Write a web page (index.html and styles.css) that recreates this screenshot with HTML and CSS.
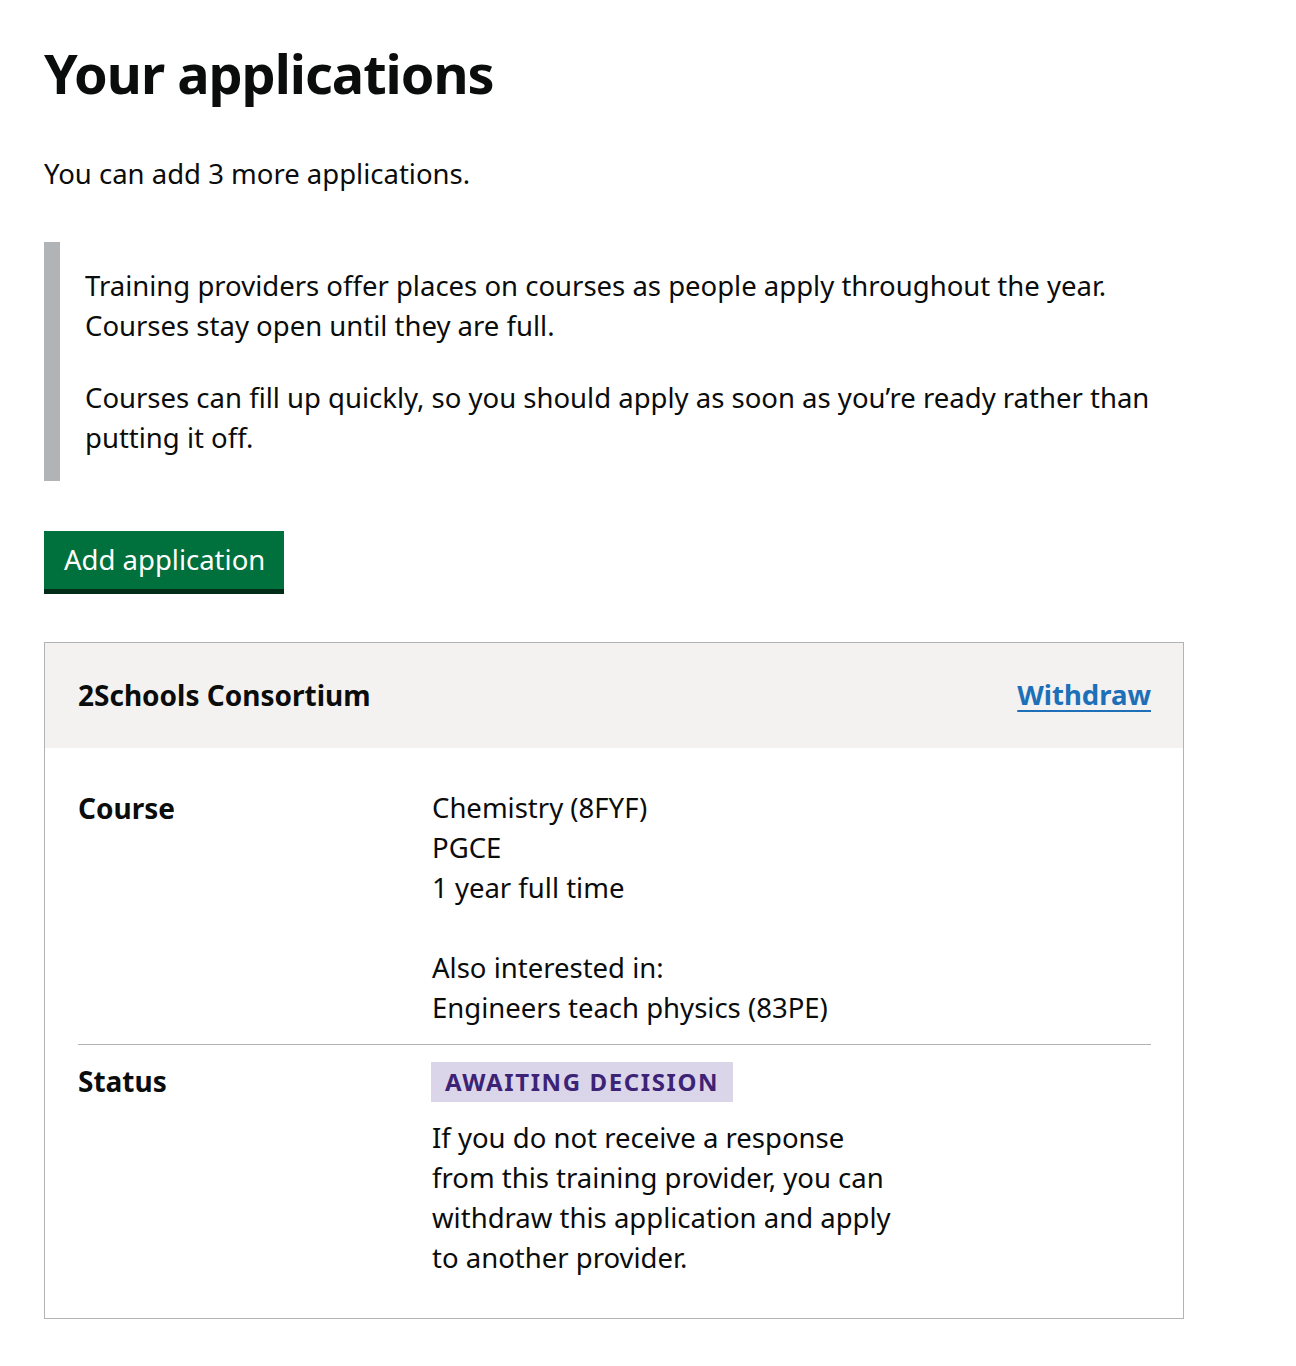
FILE: index.html
```html
<!DOCTYPE html>
<html lang="en">
<head>
<meta charset="utf-8">
<title>Your applications</title>
<link rel="stylesheet" href="styles.css">
</head>
<body>
<main class="page">
  <h1 class="heading">Your applications</h1>
  <p class="body lead">You can add 3 more applications.</p>
  <div class="inset">
    <p class="body">Training providers offer places on courses as people apply throughout the year. Courses stay open until they are full.</p>
    <p class="body">Courses can fill up quickly, so you should apply as soon as you’re ready rather than putting it off.</p>
  </div>
  <a class="button" href="#">Add application</a>
  <section class="card">
    <div class="card-header">
      <h2 class="card-title">2Schools Consortium</h2>
      <a class="card-link" href="#">Withdraw</a>
    </div>
    <dl class="summary">
      <div class="row row-course">
        <dt class="key">Course</dt>
        <dd class="value">
          <p class="body">Chemistry (8FYF)<br>PGCE<br>1 year full time</p>
          <p class="body">Also interested in:<br>Engineers teach physics (83PE)</p>
        </dd>
      </div>
      <div class="row row-status">
        <dt class="key">Status</dt>
        <dd class="value">
          <strong class="tag">Awaiting decision</strong>
          <p class="body narrow">If you do not receive a response from this training provider, you can withdraw this application and apply to another provider.</p>
        </dd>
      </div>
    </dl>
  </section>
</main>
</body>
</html>
```

FILE: styles.css
```css
* { box-sizing: border-box; }
html, body { margin: 0; padding: 0; background: #fff; }
body {
  font-family: "Noto Sans", "Liberation Sans", sans-serif;
  color: #0b0c0c;
}
.page {
  padding: 37px 44px 40px 44px;
  width: 1184px;
}
.heading {
  margin: 0;
  font-size: 54px;
  line-height: 72px;
  font-weight: 700;
  letter-spacing: -1px;
}
.body {
  margin: 0;
  font-size: 27.5px;
  line-height: 40px;
}
.lead {
  margin-top: 45px;
}
.inset {
  margin-top: 48px;
  border-left: 16px solid #b1b4b6;
  padding: 24px 0 23px 25px;
  display: flex;
  flex-direction: column;
  gap: 32px;
  width: 1140px;
}
.button {
  display: inline-block;
  margin-top: 50px;
  background: #00703c;
  color: #fff;
  text-decoration: none;
  font-size: 27.5px;
  line-height: 40px;
  padding: 9px 19px 9px 20px;
  box-shadow: 0 5px 0 #002d18;
}
.card {
  margin-top: 53px;
  width: 1140px;
  border: 1px solid #b1b4b6;
}
.card-header {
  background: #f3f2f1;
  display: flex;
  justify-content: space-between;
  align-items: center;
  padding: 32px 32px 33px 33px;
}
.card-title {
  margin: 0;
  font-size: 28px;
  line-height: 40px;
  font-weight: 700;
}
.card-link {
  font-size: 27.5px;
  line-height: 40px;
  font-weight: 700;
  color: #1d70b8;
  text-decoration: underline;
  text-decoration-thickness: 2px;
  text-underline-offset: 5px;
}
.summary {
  margin: 0;
  padding: 40px 32px 40px 33px;
}
.row {
  display: flex;
}
.row-course {
  padding-bottom: 16px;
  border-bottom: 1px solid #b1b4b6;
}
.row-status {
  padding-top: 17px;
}
.key {
  width: 354px;
  flex: none;
  font-size: 28px;
  line-height: 40px;
  font-weight: 700;
}
.value {
  margin: 0;
  display: flex;
  flex-direction: column;
  align-items: flex-start;
  gap: 40px;
}
.row-status .value { gap: 16px; }
.row-status .key { margin-top: -1px; }
.tag {
  display: inline-block;
  background: #dbd5e9;
  color: #3d2375;
  font-size: 24px;
  line-height: 40px;
  font-weight: 700;
  text-transform: uppercase;
  letter-spacing: 1.6px;
  padding: 0 14px 0 14px;
  margin-left: -1px;
}
.narrow {
  width: 465px;
}
```
